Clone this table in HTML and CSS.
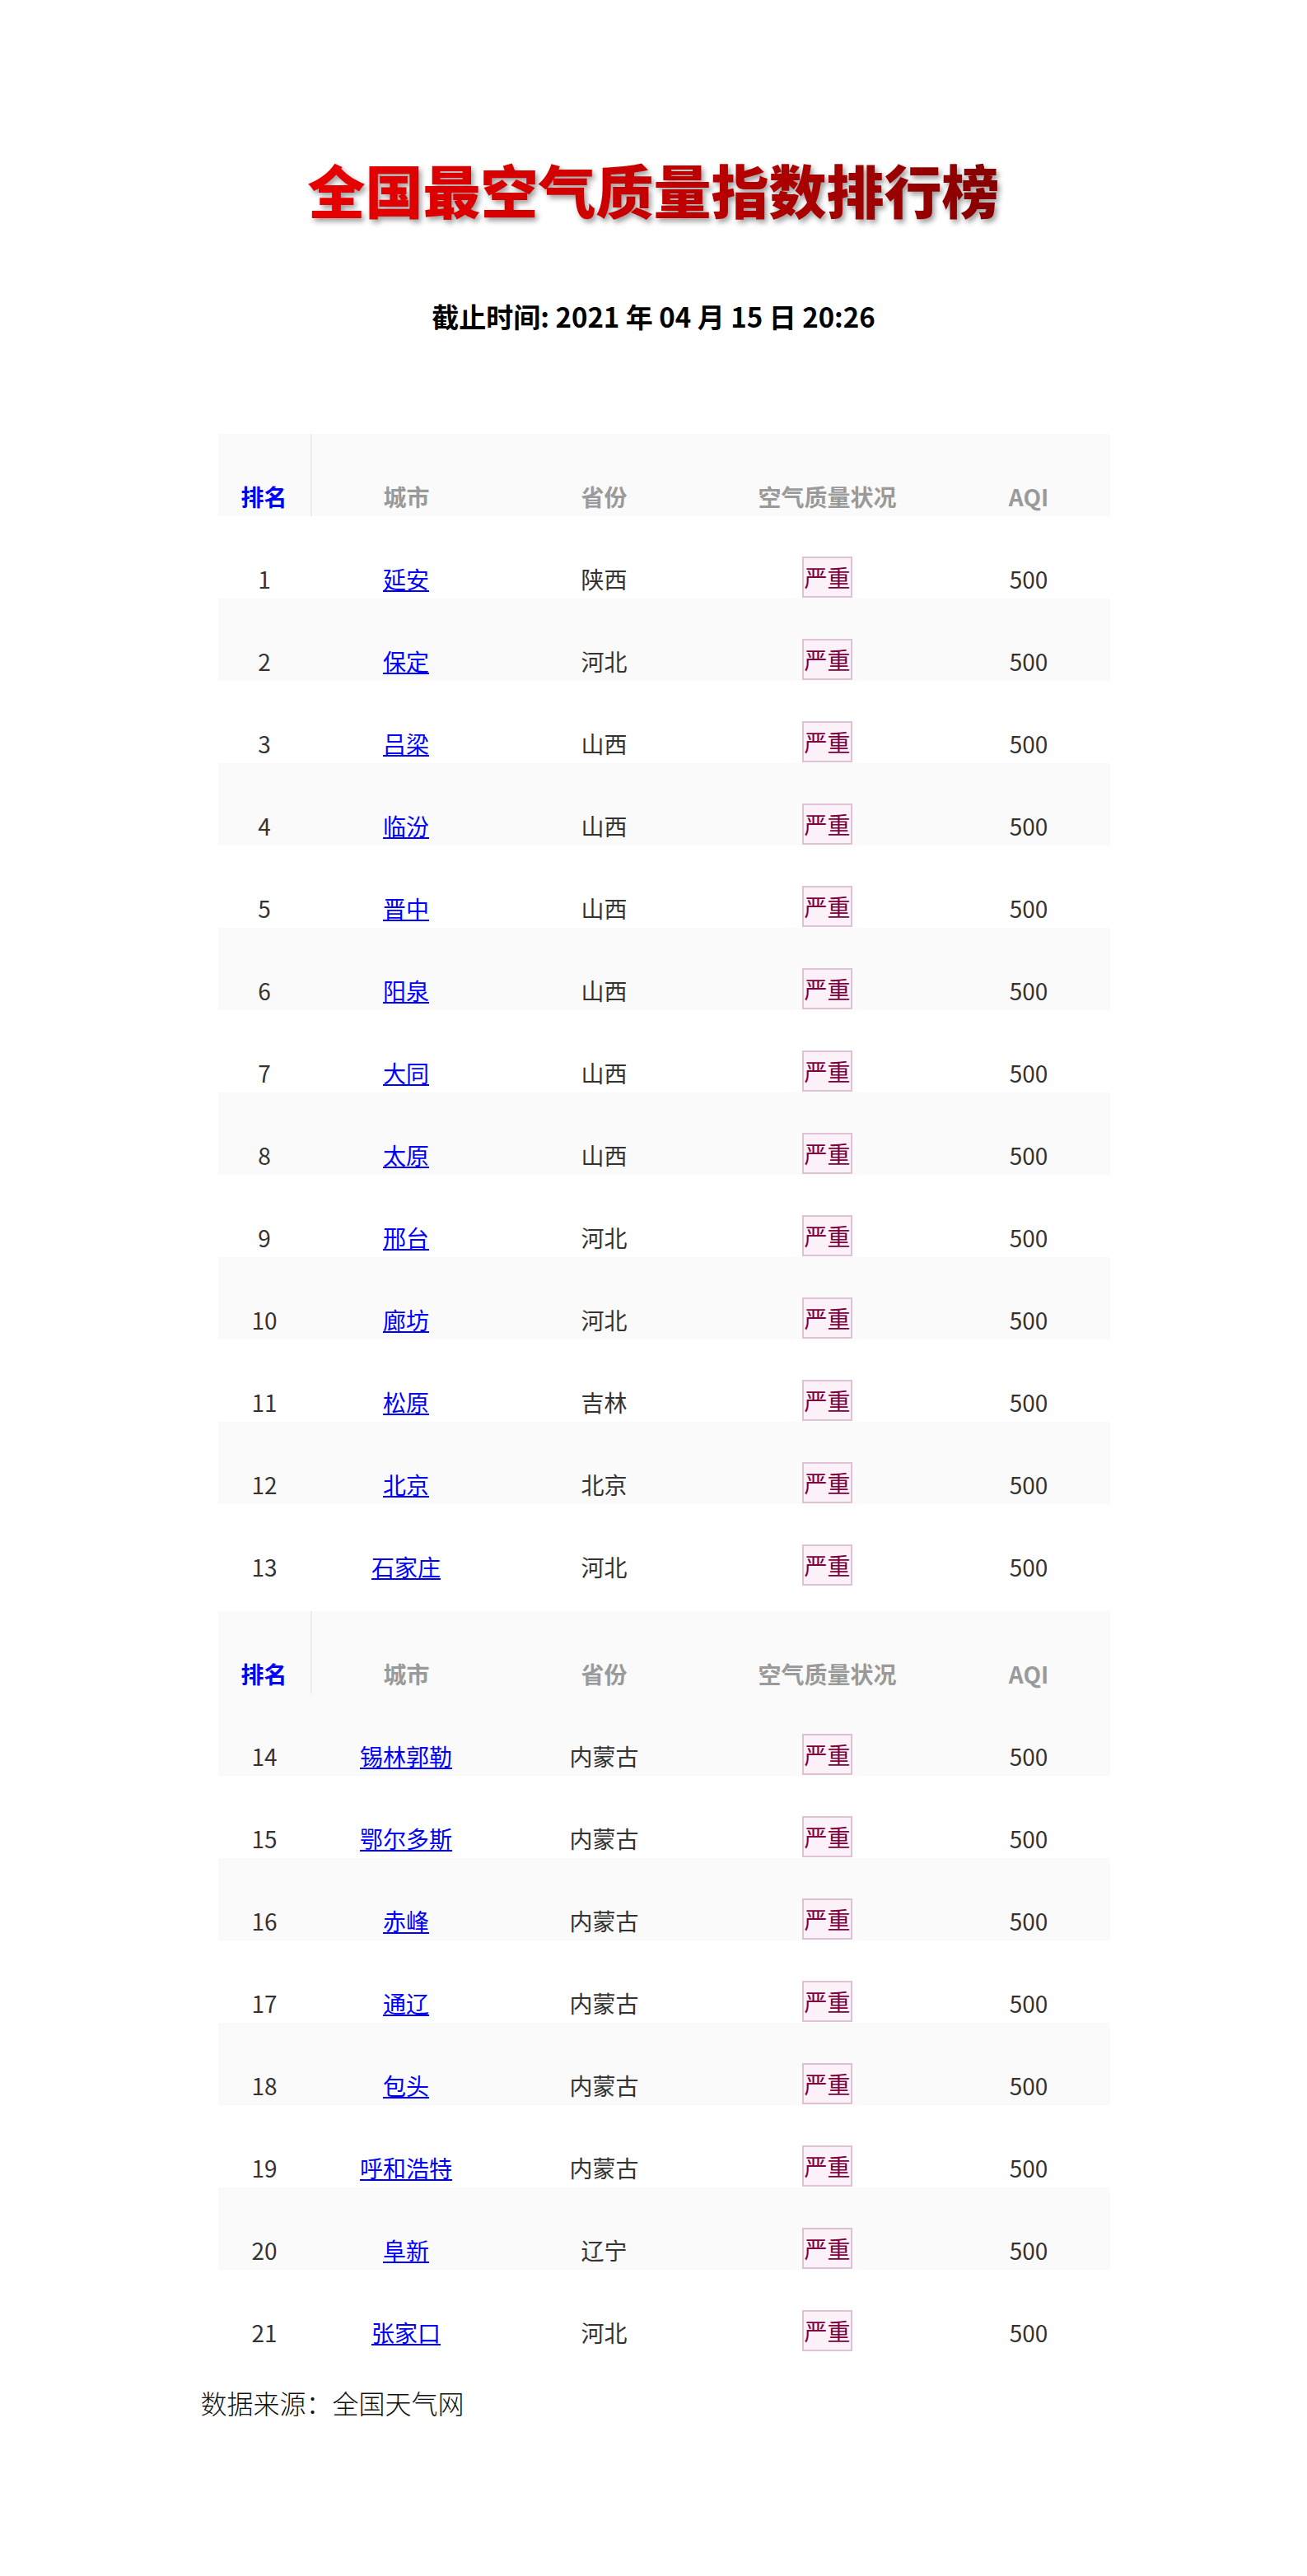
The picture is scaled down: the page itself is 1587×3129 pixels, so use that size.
FILE: index.html
```html
<!DOCTYPE html>
<html lang="zh-CN">
<head>
<meta charset="utf-8">
<title>全国最空气质量指数排行榜</title>
<link rel="stylesheet" href="styles.css">
</head>
<body>
<div class="page">
  <h1 class="title"><span class="title-text">全国最空气质量指数排行榜</span></h1>
  <div class="deadline">截止时间: 2021 年 04 月 15 日 20:26</div>

  <table class="rank">
    <colgroup>
      <col class="c1"><col class="c2"><col class="c3"><col class="c4"><col class="c5">
    </colgroup>
    <tr class="head"><th class="th-rank">排名</th><th>城市</th><th>省份</th><th>空气质量状况</th><th>AQI</th></tr>
    <tr><td>1</td><td><a href="#">延安</a></td><td>陕西</td><td><span class="lvl">严重</span></td><td>500</td></tr>
    <tr class="alt"><td>2</td><td><a href="#">保定</a></td><td>河北</td><td><span class="lvl">严重</span></td><td>500</td></tr>
    <tr><td>3</td><td><a href="#">吕梁</a></td><td>山西</td><td><span class="lvl">严重</span></td><td>500</td></tr>
    <tr class="alt"><td>4</td><td><a href="#">临汾</a></td><td>山西</td><td><span class="lvl">严重</span></td><td>500</td></tr>
    <tr><td>5</td><td><a href="#">晋中</a></td><td>山西</td><td><span class="lvl">严重</span></td><td>500</td></tr>
    <tr class="alt"><td>6</td><td><a href="#">阳泉</a></td><td>山西</td><td><span class="lvl">严重</span></td><td>500</td></tr>
    <tr><td>7</td><td><a href="#">大同</a></td><td>山西</td><td><span class="lvl">严重</span></td><td>500</td></tr>
    <tr class="alt"><td>8</td><td><a href="#">太原</a></td><td>山西</td><td><span class="lvl">严重</span></td><td>500</td></tr>
    <tr><td>9</td><td><a href="#">邢台</a></td><td>河北</td><td><span class="lvl">严重</span></td><td>500</td></tr>
    <tr class="alt"><td>10</td><td><a href="#">廊坊</a></td><td>河北</td><td><span class="lvl">严重</span></td><td>500</td></tr>
    <tr><td>11</td><td><a href="#">松原</a></td><td>吉林</td><td><span class="lvl">严重</span></td><td>500</td></tr>
    <tr class="alt"><td>12</td><td><a href="#">北京</a></td><td>北京</td><td><span class="lvl">严重</span></td><td>500</td></tr>
    <tr><td>13</td><td><a href="#">石家庄</a></td><td>河北</td><td><span class="lvl">严重</span></td><td>500</td></tr>
  </table>

  <table class="rank second">
    <colgroup>
      <col class="c1"><col class="c2"><col class="c3"><col class="c4"><col class="c5">
    </colgroup>
    <tr class="head"><th class="th-rank">排名</th><th>城市</th><th>省份</th><th>空气质量状况</th><th>AQI</th></tr>
    <tr class="alt"><td>14</td><td><a href="#">锡林郭勒</a></td><td>内蒙古</td><td><span class="lvl">严重</span></td><td>500</td></tr>
    <tr><td>15</td><td><a href="#">鄂尔多斯</a></td><td>内蒙古</td><td><span class="lvl">严重</span></td><td>500</td></tr>
    <tr class="alt"><td>16</td><td><a href="#">赤峰</a></td><td>内蒙古</td><td><span class="lvl">严重</span></td><td>500</td></tr>
    <tr><td>17</td><td><a href="#">通辽</a></td><td>内蒙古</td><td><span class="lvl">严重</span></td><td>500</td></tr>
    <tr class="alt"><td>18</td><td><a href="#">包头</a></td><td>内蒙古</td><td><span class="lvl">严重</span></td><td>500</td></tr>
    <tr><td>19</td><td><a href="#">呼和浩特</a></td><td>内蒙古</td><td><span class="lvl">严重</span></td><td>500</td></tr>
    <tr class="alt"><td>20</td><td><a href="#">阜新</a></td><td>辽宁</td><td><span class="lvl">严重</span></td><td>500</td></tr>
    <tr><td>21</td><td><a href="#">张家口</a></td><td>河北</td><td><span class="lvl">严重</span></td><td>500</td></tr>
  </table>

  <p class="source">数据来源：全国天气网</p>
</div>
</body>
</html>
```

FILE: styles.css
```css
html, body {
  margin: 0;
  padding: 0;
  background: #ffffff;
}

.page {
  width: 1100px;
  margin: 0 auto;
  padding-top: 180px;
  padding-bottom: 120px;
  font-family: "Noto Sans CJK SC", "Noto Sans", sans-serif;
}

.title {
  margin: 0;
  text-align: center;
  font-size: 70px;
  line-height: 100px;
  font-weight: 900;
  font-family: "Noto Sans CJK SC", sans-serif;
}

.title-text {
  display: inline-block;
  background: linear-gradient(to right, #e80000 0%, #d00000 40%, #860000 100%);
  -webkit-background-clip: text;
  background-clip: text;
  color: transparent;
  filter: drop-shadow(3px 4px 3px rgba(0, 0, 0, 0.38));
}

.deadline {
  margin-top: 80px;
  text-align: center;
  font-size: 33px;
  line-height: 48px;
  font-weight: 700;
  color: #000;
}

.rank {
  margin-top: 119px;
  margin-left: 21px;
  width: 1083px;
  border-collapse: collapse;
  border-spacing: 0;
  table-layout: fixed;
  font-size: 28px;
  color: #333;
}

.rank.second {
  margin-top: 30px;
}

.c1 { width: 113px; }
.c2 { width: 231px; }
.c3 { width: 250px; }
.c4 { width: 292px; }
.c5 { width: 197px; }

.rank th,
.rank td {
  height: 99px;
  padding: 0 0 1px 0;
  text-align: center;
  vertical-align: bottom;
  line-height: 46px;
  white-space: nowrap;
}

.rank .head {
  background: #fafafa;
}

.rank th {
  font-weight: 700;
  color: #9a9a9a;
}

.rank th.th-rank {
  color: #0000ff;
  border-right: 2px solid #ececec;
}

.rank tr.alt {
  background: #fafafa;
}

.rank a {
  color: #0000ff;
  text-decoration: underline;
}

.lvl {
  display: inline-block;
  border: 2px solid #dcc2d3;
  background: #fdf1f9;
  color: #7e0040;
  line-height: 46px;
  padding: 0;
}

.source {
  margin: 38px 0 0 0;
  font-size: 32px;
  line-height: 46px;
  font-weight: 300;
  color: #111;
}
```
